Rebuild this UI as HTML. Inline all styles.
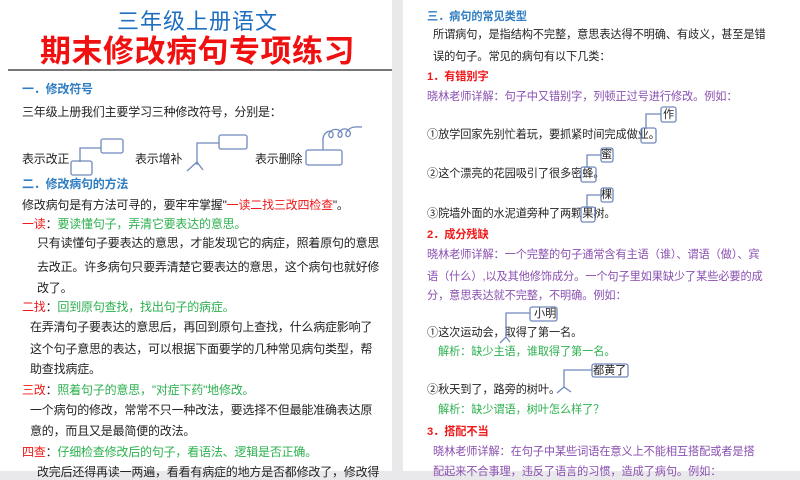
<!DOCTYPE html>
<html><head><meta charset="utf-8"><style>
body{margin:0;width:800px;height:471px;background:#e9e9ec;overflow:hidden;position:relative;font-family:"Liberation Sans","Noto Sans CJK SC",sans-serif;}
.pg{position:absolute;top:0;height:471px;background:#fff;}
.t{position:absolute;white-space:nowrap;font-size:12px;line-height:16px;color:#222;letter-spacing:-0.2px;}
.R .t{font-size:11.2px;letter-spacing:-0.1px;}
.h{color:#2f7dc2;font-weight:bold;}
.r{color:#f01818;}
.g{color:#2db04f;}
.p{color:#8a4fb0;}
.rb{color:#f01818;font-weight:bold;}
</style></head><body>
<div class="pg" style="left:0;width:392px"></div>
<div class="pg" style="left:403px;width:397px"></div>

<div class="t" style="left:117px;top:9px;font-size:22px;line-height:26px;color:#1f6fc0;letter-spacing:1px">三年级上册语文</div>
<div class="t" style="left:40px;top:34px;font-size:31px;line-height:36px;color:#f01010;font-weight:bold;letter-spacing:0.5px;">期末修改病句专项练习</div>
<div style="position:absolute;left:8px;top:69px;width:384px;height:2px;background:#777"></div>

<div class="t h" style="left:22px;top:81px">一．修改符号</div>
<div class="t" style="left:22px;top:104px">三年级上册我们主要学习三种修改符号，分别是：</div>
<div class="t" style="left:22px;top:151px">表示改正</div>
<div class="t" style="left:135px;top:151px">表示增补</div>
<div class="t" style="left:255px;top:151px">表示删除</div>
<svg style="position:absolute;left:0;top:120px" width="400" height="60" fill="none" stroke="#7189bd" stroke-width="1.3">
<rect x="101" y="19" width="22" height="14" rx="2"/><path d="M101 28H80V42"/><rect x="71" y="41" width="21" height="14" rx="2"/>
<rect x="219" y="15" width="28" height="14" rx="2"/><path d="M219 23H197V45M187 51L197 42L203 50"/>
<rect x="306" y="30" width="36" height="15" rx="2"/><path d="M323 30V21C322 12 332 8 333 14C334 20 326 18 330 12C334 7 343 10 342 15C341 20 335 16 340 11C345 6 352 11 350 15C348 19 343 15 348 10C352 6 358 7 362 7"/>
</svg>

<div class="t h" style="left:22px;top:176px">二．修改病句的方法</div>
<div class="t" style="left:22px;top:197px">修改病句是有方法可寻的，要牢牢掌握"<span class="r">一读二找三改四检查</span>"。</div>
<div class="t" style="left:22px;top:216px"><span class="r">一读</span>：<span class="g">要读懂句子，弄清它要表达的意思。</span></div>
<div class="t" style="left:37px;top:235px">只有读懂句子要表达的意思，才能发现它的病症，照着原句的意思</div>
<div class="t" style="left:37px;top:259px">去改正。许多病句只要弄清楚它要表达的意思，这个病句也就好修</div>
<div class="t" style="left:37px;top:280px">改了。</div>
<div class="t" style="left:22px;top:299px"><span class="r">二找</span>：<span class="g">回到原句查找，找出句子的病症。</span></div>
<div class="t" style="left:30px;top:319px">在弄清句子要表达的意思后，再回到原句上查找，什么病症影响了</div>
<div class="t" style="left:30px;top:341px">这个句子意思的表达，可以根据下面要学的几种常见病句类型，帮</div>
<div class="t" style="left:30px;top:361px">助查找病症。</div>
<div class="t" style="left:22px;top:382px"><span class="r">三改</span>：<span class="g">照着句子的意思，"对症下药"地修改。</span></div>
<div class="t" style="left:30px;top:402px">一个病句的修改，常常不只一种改法，要选择不但最能准确表达原</div>
<div class="t" style="left:30px;top:423px">意的，而且又是最简便的改法。</div>
<div class="t" style="left:22px;top:444px"><span class="r">四查</span>：<span class="g">仔细检查修改后的句子，看语法、逻辑是否正确。</span></div>
<div class="t" style="left:37px;top:464px">改完后还得再读一两遍，看看有病症的地方是否都修改了，修改得</div>

<div class="R">
<div class="t h" style="left:427px;top:9px">三．病句的常见类型</div>
<div class="t" style="left:433px;top:27px">所谓病句，是指结构不完整，意思表达得不明确、有歧义，甚至是错</div>
<div class="t" style="left:433px;top:49px">误的句子。常见的病句有以下几类：</div>
<div class="t rb" style="left:427px;top:69px">1．有错别字</div>
<div class="t p" style="left:427px;top:89px">晓林老师详解：句子中又错别字，列顿正过号进行修改。例如：</div>
<div class="t" style="left:427px;top:127px">①放学回家先别忙着玩，要抓紧时间完成做业。</div>
<div class="t" style="left:427px;top:166px">②这个漂亮的花园吸引了很多密蜂。</div>
<div class="t" style="left:427px;top:206px">③院墙外面的水泥道旁种了两颗果树。</div>
<div class="t" style="left:663px;top:107px">作</div>
<div class="t" style="left:601px;top:147px">蜜</div>
<div class="t" style="left:601px;top:187px">棵</div>
<div class="t rb" style="left:427px;top:227px">2．成分残缺</div>
<div class="t p" style="left:427px;top:247px">晓林老师详解：一个完整的句子通常含有主语（谁）、谓语（做）、宾</div>
<div class="t p" style="left:427px;top:269px">语（什么）,以及其他修饰成分。一个句子里如果缺少了某些必要的成</div>
<div class="t p" style="left:427px;top:288px">分，意思表达就不完整，不明确。例如：</div>
<div class="t" style="left:534px;top:306px">小明</div>
<div class="t" style="left:427px;top:325px">①这次运动会，取得了第一名。</div>
<div class="t g" style="left:438px;top:344px">解析：缺少主语，谁取得了第一名。</div>
<div class="t" style="left:593px;top:363px">都黄了</div>
<div class="t" style="left:427px;top:382px">②秋天到了，路旁的树叶。</div>
<div class="t g" style="left:438px;top:402px">解析：缺少谓语，树叶怎么样了？</div>
<div class="t rb" style="left:427px;top:424px">3．搭配不当</div>
<div class="t p" style="left:433px;top:444px">晓林老师详解：在句子中某些词语在意义上不能相互搭配或者是搭</div>
<div class="t p" style="left:433px;top:464px">配起来不合事理，违反了语言的习惯，造成了病句。例如：</div>
</div>
<svg style="position:absolute;left:400px;top:100px" width="400" height="130" fill="none" stroke="#7189bd" stroke-width="1.3">
<rect x="261" y="7" width="15" height="15" rx="2"/><path d="M261 14H246V29"/><rect x="241" y="28" width="15" height="15" rx="2"/>
<rect x="201" y="48" width="12" height="14" rx="2"/><path d="M201 55H187V68"/><rect x="181" y="67" width="15" height="15" rx="2"/>
<rect x="201" y="88" width="12" height="14" rx="2"/><path d="M201 95H187V108"/><rect x="181" y="107" width="14" height="15" rx="2"/>
</svg>
<svg style="position:absolute;left:400px;top:300px" width="400" height="95" fill="none" stroke="#7189bd" stroke-width="1.3">
<rect x="130" y="7" width="27" height="14" rx="2"/><path d="M130 13H106V38M100 43L106 37L110 42"/>
<rect x="192" y="64" width="36" height="13" rx="2"/><path d="M192 70H164V88M157 93L164 87L171 92"/>
</svg>
</body></html>
